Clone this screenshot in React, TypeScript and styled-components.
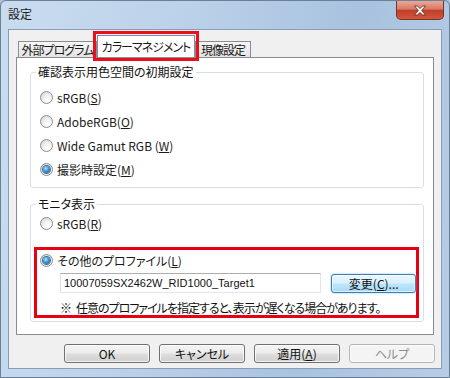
import React from 'react';
import styled, {createGlobalStyle, css} from 'styled-components';

const GlobalStyle = createGlobalStyle`
  html, body {
    margin: 0;
    padding: 0;
  }
  body {
    width: 450px;
    height: 378px;
    overflow: hidden;
    background: #a9c1dc;
    font-family: "Noto Sans CJK JP", "Noto Sans", sans-serif;
    font-feature-settings: "palt";
    font-size: 12px;
    color: #1a1a1a;
  }
`;

const Window = styled.div`
  width: 450px;
  height: 378px;
  box-sizing: border-box;
  display: flex;
  flex-direction: column;
  padding: 0 7px 8px;
  border: 1px solid #6b7f96;
  border-radius: 6px 6px 0 0;
  background: linear-gradient(100deg, #cadcef 0%, #bcd2ea 35%, #a8c2df 70%, #b7cde6 100%);
`;

const TitleBar = styled.div`
  height: 28px;
  display: flex;
  align-items: flex-start;
  justify-content: space-between;
`;

const Caption = styled.span`
  margin-top: 5px;
  line-height: 16px;
  color: #1b1b1b;
`;

const CloseButton = styled.div`
  width: 46px;
  height: 18px;
  margin-right: -2px;
  display: flex;
  align-items: center;
  justify-content: center;
  border: 1px solid #7a3326;
  border-top: none;
  border-radius: 0 0 5px 5px;
  background: linear-gradient(#eaa998 0%, #d77965 45%, #bf3f27 52%, #d1573b 100%);
`;

const Client = styled.div`
  flex: 1;
  display: flex;
  flex-direction: column;
  padding: 0 7px;
  background: #f0f0f0;
  border: 1px solid #8a9db4;
`;

const TabRow = styled.div`
  height: 27px;
  display: flex;
  align-items: flex-end;
  padding-left: 2px;
`;

const Tab = styled.div<{$w: number; $active?: boolean}>`
  width: ${p => p.$w}px;
  box-sizing: border-box;
  display: flex;
  align-items: center;
  justify-content: center;
  white-space: nowrap;
  letter-spacing: -1px;
  border: 1px solid #898c95;
  border-bottom: none;
  height: 16px;
  background: linear-gradient(#f6f6f6, #e4e4e4);
  ${p =>
    p.$active &&
    css`
      height: 22px;
      background: #fff;
      outline: 3px solid #e8101c;
      outline-offset: 1px;
      position: relative;
      z-index: 1;
    `}
`;

const Panel = styled.div`
  height: 278px;
  box-sizing: border-box;
  padding: 6px 9px 0 13px;
  background: #fff;
  border: 1px solid #898c95;
`;

const Group = styled.fieldset<{$top?: number}>`
  margin: ${p => p.$top ?? 0}px 0 0;
  padding: 0;
  border: 1px solid #d5dfe5;
  border-radius: 3px;
  min-width: 0;
`;

const Legend = styled.legend`
  margin-left: 5px;
  padding: 0 2px;
  line-height: 16px;
  color: #111;
`;

const GroupBody = styled.div<{$pad: string}>`
  padding: ${p => p.$pad};
`;

const RadioRow = styled.div<{$h?: number; $indent?: number}>`
  height: ${p => p.$h ?? 24}px;
  padding-left: ${p => p.$indent ?? 0}px;
  display: flex;
  align-items: center;
  gap: 4px;
`;

const RadioDot = styled.span<{$checked?: boolean}>`
  width: 13px;
  height: 13px;
  box-sizing: border-box;
  border-radius: 50%;
  border: 1px solid #8b8d90;
  background: radial-gradient(circle at 65% 70%, #ffffff 0%, #f2f2f2 40%, #cfd0d2 100%);
  display: flex;
  align-items: center;
  justify-content: center;
  &::after {
    content: '';
    display: ${p => (p.$checked ? 'block' : 'none')};
    width: 7px;
    height: 7px;
    border-radius: 50%;
    background: radial-gradient(circle at 40% 35%, #b8e6ff 0%, #3c93d4 45%, #0f4f88 100%);
    box-shadow: 0 0 0 1px #3a6f9c;
  }
`;

const U = styled.span`
  text-decoration: underline;
  text-underline-offset: 1px;
`;

const Highlight = styled.div`
  margin-top: 14px;
  padding-left: 3px;
  border: 3px solid #e60012;
`;

const FieldRow = styled.div`
  margin: 3px 0 0 20px;
  display: flex;
  align-items: center;
  gap: 10px;
`;

const TextField = styled.div`
  width: 263px;
  height: 20px;
  box-sizing: border-box;
  display: flex;
  align-items: center;
  padding-left: 3px;
  background: #fff;
  border: 1px solid #e2e6ec;
  border-top-color: #abadb3;
  border-left-color: #dbdfe6;
  font-family: "Liberation Sans", Arial, sans-serif;
  font-size: 11px;
  color: #111;
`;

const Note = styled.div`
  margin: 7px 0 0 20px;
  line-height: 15px;
  letter-spacing: -1px;
  white-space: nowrap;
  color: #111;
`;

const NoteMark = styled.span`
  margin-right: 5px;
`;

const Button = styled.div<{$w: number; $kind?: 'focus' | 'disabled'}>`
  width: ${p => p.$w}px;
  height: 19px;
  box-sizing: border-box;
  display: flex;
  align-items: center;
  justify-content: center;
  border: 1px solid #707070;
  border-radius: 3px;
  background: linear-gradient(#f4f4f4 0%, #ececec 48%, #dedede 52%, #d0d0d0 100%);
  box-shadow: inset 0 0 0 1px rgba(255, 255, 255, 0.75);
  color: #111;
  ${p =>
    p.$kind === 'focus' &&
    css`
      border-color: #3c7fb1;
      background: linear-gradient(#eaf6fd 0%, #d9f0fc 48%, #bee6fd 52%, #a7d9f5 100%);
      box-shadow: inset 0 0 0 1px rgba(255, 255, 255, 0.6), 0 0 2px #6fb4e6;
    `}
  ${p =>
    p.$kind === 'disabled' &&
    css`
      border-color: #b1b5b8;
      background: #f4f4f4;
      color: #8d8d8d;
    `}
`;

const ButtonRow = styled.div`
  margin-top: 9px;
  margin-right: -1px;
  display: flex;
  justify-content: flex-end;
  gap: 9px;
`;

const CloseIcon = () => (
  <svg width="14" height="11" viewBox="0 0 14 11">
    <path
      d="M1.5 1 L4.5 1 L7 3.6 L9.5 1 L12.5 1 L8.6 5.5 L12.5 10 L9.5 10 L7 7.4 L4.5 10 L1.5 10 L5.4 5.5 Z"
      fill="#fff"
      stroke="#5a1d14"
      strokeWidth="0.8"
      strokeLinejoin="round"
    />
  </svg>
);

const Radio = ({
  checked,
  children,
  h,
  indent,
}: {
  checked?: boolean;
  children: React.ReactNode;
  h?: number;
  indent?: number;
}) => (
  <RadioRow $h={h} $indent={indent}>
    <RadioDot $checked={checked} />
    <span>{children}</span>
  </RadioRow>
);

export default function App() {
  return (
    <>
      <GlobalStyle />
      <Window>
        <TitleBar>
          <Caption>設定</Caption>
          <CloseButton>
            <CloseIcon />
          </CloseButton>
        </TitleBar>
        <Client>
          <TabRow>
            <Tab $w={79}>外部プログラム</Tab>
            <Tab $w={98} $active>
              カラーマネジメント
            </Tab>
            <Tab $w={56}>現像設定</Tab>
          </TabRow>
          <Panel>
            <Group>
              <Legend>確認表示用色空間の初期設定</Legend>
              <GroupBody $pad="5px 0 6px 9px">
                <Radio>
                  sRGB(<U>S</U>)
                </Radio>
                <Radio>
                  AdobeRGB(<U>O</U>)
                </Radio>
                <Radio>
                  Wide Gamut RGB (<U>W</U>)
                </Radio>
                <Radio checked>
                  撮影時設定(<U>M</U>)
                </Radio>
              </GroupBody>
            </Group>
            <Group $top={8}>
              <Legend>モニタ表示</Legend>
              <GroupBody $pad="1px 4px 3px 3px">
                <Radio h={20} indent={6}>
                  sRGB(<U>R</U>)
                </Radio>
                <Highlight>
                  <Radio h={20} checked>
                    その他のプロファイル(<U>L</U>)
                  </Radio>
                  <FieldRow>
                    <TextField>10007059SX2462W_RID1000_Target1</TextField>
                    <Button $w={85} $kind="focus">
                      変更(<U>C</U>)...
                    </Button>
                  </FieldRow>
                  <Note>
                    <NoteMark>※</NoteMark>任意のプロファイルを指定すると、表示が遅くなる場合があります。
                  </Note>
                </Highlight>
              </GroupBody>
            </Group>
          </Panel>
          <ButtonRow>
            <Button $w={86}>OK</Button>
            <Button $w={86}>キャンセル</Button>
            <Button $w={86}>
              適用(<U>A</U>)
            </Button>
            <Button $w={86} $kind="disabled">
              ヘルプ
            </Button>
          </ButtonRow>
        </Client>
      </Window>
    </>
  );
}
